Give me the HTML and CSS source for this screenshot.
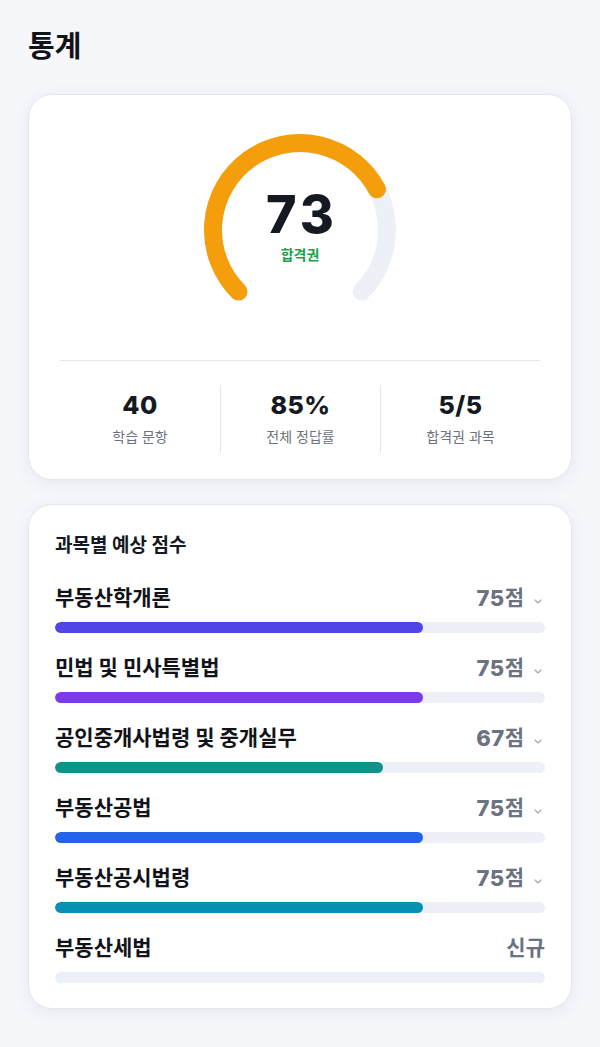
FILE: index.html
```html
<!DOCTYPE html>
<html lang="ko">
<head>
<meta charset="utf-8">
<title>통계</title>
<link rel="stylesheet" href="styles.css">
</head>
<body>
<main class="page">
  <h1 class="page-title">통계</h1>

  <section class="card summary">
    <div class="gauge">
      <svg class="gauge-svg" width="192" height="192" viewBox="0 0 192 192">
        <path d="M 34.48 157.52 A 87 87 0 1 1 157.52 157.52" fill="none" stroke="#edf0f6" stroke-width="18" stroke-linecap="round"/>
        <path d="M 34.48 157.52 A 87 87 0 1 1 172.89 55.29" fill="none" stroke="#f59e0b" stroke-width="18" stroke-linecap="round"/>
      </svg>
      <div class="gauge-label">
        <div class="gauge-score">73</div>
        <div class="gauge-status">합격권</div>
      </div>
    </div>
    <div class="divider"></div>
    <div class="stats">
      <div class="stat">
        <div class="stat-value">40</div>
        <div class="stat-label">학습 문항</div>
      </div>
      <div class="stat">
        <div class="stat-value">85%</div>
        <div class="stat-label">전체 정답률</div>
      </div>
      <div class="stat">
        <div class="stat-value">5/5</div>
        <div class="stat-label">합격권 과목</div>
      </div>
    </div>
  </section>

  <section class="card subjects">
    <h2 class="section-title">과목별 예상 점수</h2>
    <ul class="subject-list">
      <li class="subject">
        <div class="subject-head">
          <span class="subject-name">부동산학개론</span>
          <span class="subject-score"><span class="num">75</span>점<svg class="chev" width="8" height="5" viewBox="0 0 8 5"><polyline points="1,1 4,4 7,1" fill="none" stroke="#9ca3af" stroke-width="1.1" stroke-linecap="round" stroke-linejoin="round"/></svg></span>
        </div>
        <div class="track"><div class="fill fill-indigo" style="width:75%"></div></div>
      </li>
      <li class="subject">
        <div class="subject-head">
          <span class="subject-name">민법 및 민사특별법</span>
          <span class="subject-score"><span class="num">75</span>점<svg class="chev" width="8" height="5" viewBox="0 0 8 5"><polyline points="1,1 4,4 7,1" fill="none" stroke="#9ca3af" stroke-width="1.1" stroke-linecap="round" stroke-linejoin="round"/></svg></span>
        </div>
        <div class="track"><div class="fill fill-violet" style="width:75%"></div></div>
      </li>
      <li class="subject">
        <div class="subject-head">
          <span class="subject-name">공인중개사법령 및 중개실무</span>
          <span class="subject-score"><span class="num">67</span>점<svg class="chev" width="8" height="5" viewBox="0 0 8 5"><polyline points="1,1 4,4 7,1" fill="none" stroke="#9ca3af" stroke-width="1.1" stroke-linecap="round" stroke-linejoin="round"/></svg></span>
        </div>
        <div class="track"><div class="fill fill-teal" style="width:67%"></div></div>
      </li>
      <li class="subject">
        <div class="subject-head">
          <span class="subject-name">부동산공법</span>
          <span class="subject-score"><span class="num">75</span>점<svg class="chev" width="8" height="5" viewBox="0 0 8 5"><polyline points="1,1 4,4 7,1" fill="none" stroke="#9ca3af" stroke-width="1.1" stroke-linecap="round" stroke-linejoin="round"/></svg></span>
        </div>
        <div class="track"><div class="fill fill-blue" style="width:75%"></div></div>
      </li>
      <li class="subject">
        <div class="subject-head">
          <span class="subject-name">부동산공시법령</span>
          <span class="subject-score"><span class="num">75</span>점<svg class="chev" width="8" height="5" viewBox="0 0 8 5"><polyline points="1,1 4,4 7,1" fill="none" stroke="#9ca3af" stroke-width="1.1" stroke-linecap="round" stroke-linejoin="round"/></svg></span>
        </div>
        <div class="track"><div class="fill fill-cyan" style="width:75%"></div></div>
      </li>
      <li class="subject">
        <div class="subject-head">
          <span class="subject-name">부동산세법</span>
          <span class="subject-score subject-new">신규</span>
        </div>
        <div class="track"></div>
      </li>
    </ul>
  </section>
</main>
</body>
</html>
```

FILE: styles.css
```css
* { box-sizing: border-box; }

html, body {
  margin: 0;
  padding: 0;
  background: #f6f7fb;
}

body {
  font-family: Inter, "Noto Sans CJK KR", "Noto Sans", sans-serif;
  color: #111827;
}

.page {
  padding: 29px 28px 40px;
}

.page-title {
  margin: 0 0 29px;
  font-size: 29px;
  line-height: 36px;
  font-weight: 700;
  color: #111318;
}

.card {
  background: #ffffff;
  border: 1px solid #e4e7ee;
  border-radius: 24px;
  box-shadow: 0 4px 18px rgba(30, 40, 80, 0.07);
}

/* summary card */
.summary {
  padding: 39px 31px 26px;
}

.gauge {
  position: relative;
  width: 192px;
  height: 192px;
  margin: 0 auto;
}

.gauge-svg {
  display: block;
}

.gauge-label {
  position: absolute;
  inset: 0;
  display: flex;
  flex-direction: column;
  align-items: center;
  padding-top: 55px;
}

.gauge-score {
  font-size: 52px;
  line-height: 51px;
  font-weight: 800;
  color: #151922;
  letter-spacing: 4px;
  margin-right: -4px;
}

.gauge-status {
  margin-top: 5px;
  font-size: 14px;
  line-height: 20px;
  font-weight: 700;
  color: #16a34a;
}

.divider {
  height: 1px;
  background: #e6e8ee;
  margin-top: 34px;
}

.stats {
  display: grid;
  grid-template-columns: 1fr 1fr 1fr;
  margin-top: 24px;
}

.stat {
  display: flex;
  flex-direction: column;
  align-items: center;
  height: 68px;
  padding-top: 5px;
}

.stat + .stat {
  border-left: 1px solid #e3e6ed;
}

.stat-value {
  font-size: 25px;
  line-height: 30px;
  font-weight: 800;
  color: #151922;
  letter-spacing: 0.5px;
}

.stat-label {
  margin-top: 7px;
  font-size: 14px;
  line-height: 20px;
  color: #6b7280;
}

/* subjects card */
.subjects {
  margin-top: 24px;
  padding: 29px 26px 25px;
}

.section-title {
  margin: 0;
  font-size: 19px;
  line-height: 24px;
  font-weight: 700;
  color: #151922;
}

.subject-list {
  list-style: none;
  margin: 26px 0 0;
  padding: 0;
  display: flex;
  flex-direction: column;
  gap: 21px;
}

.subject-head {
  display: flex;
  justify-content: space-between;
  align-items: center;
  height: 28px;
}

.subject-name {
  font-size: 21px;
  line-height: 28px;
  font-weight: 700;
  color: #111318;
}

.subject-score {
  display: flex;
  align-items: center;
  font-size: 21px;
  line-height: 28px;
  font-weight: 700;
  color: #6b7280;
}

.num {
  font-size: 22px;
  font-weight: 800;
  letter-spacing: 0.5px;
}

.chev {
  margin-left: 10px;
  margin-right: 3px;
  margin-top: 7px;
}

.subject-new {
  font-size: 21px;
}

.track {
  margin-top: 10px;
  height: 11px;
  border-radius: 6px;
  background: #edf0f7;
  overflow: hidden;
}

.fill {
  height: 100%;
  border-radius: 6px;
}

.fill-indigo { background: #4f46e5; }
.fill-violet { background: #7c3aed; }
.fill-teal { background: #0d9488; }
.fill-blue { background: #2563eb; }
.fill-cyan { background: #0891b2; }
```
